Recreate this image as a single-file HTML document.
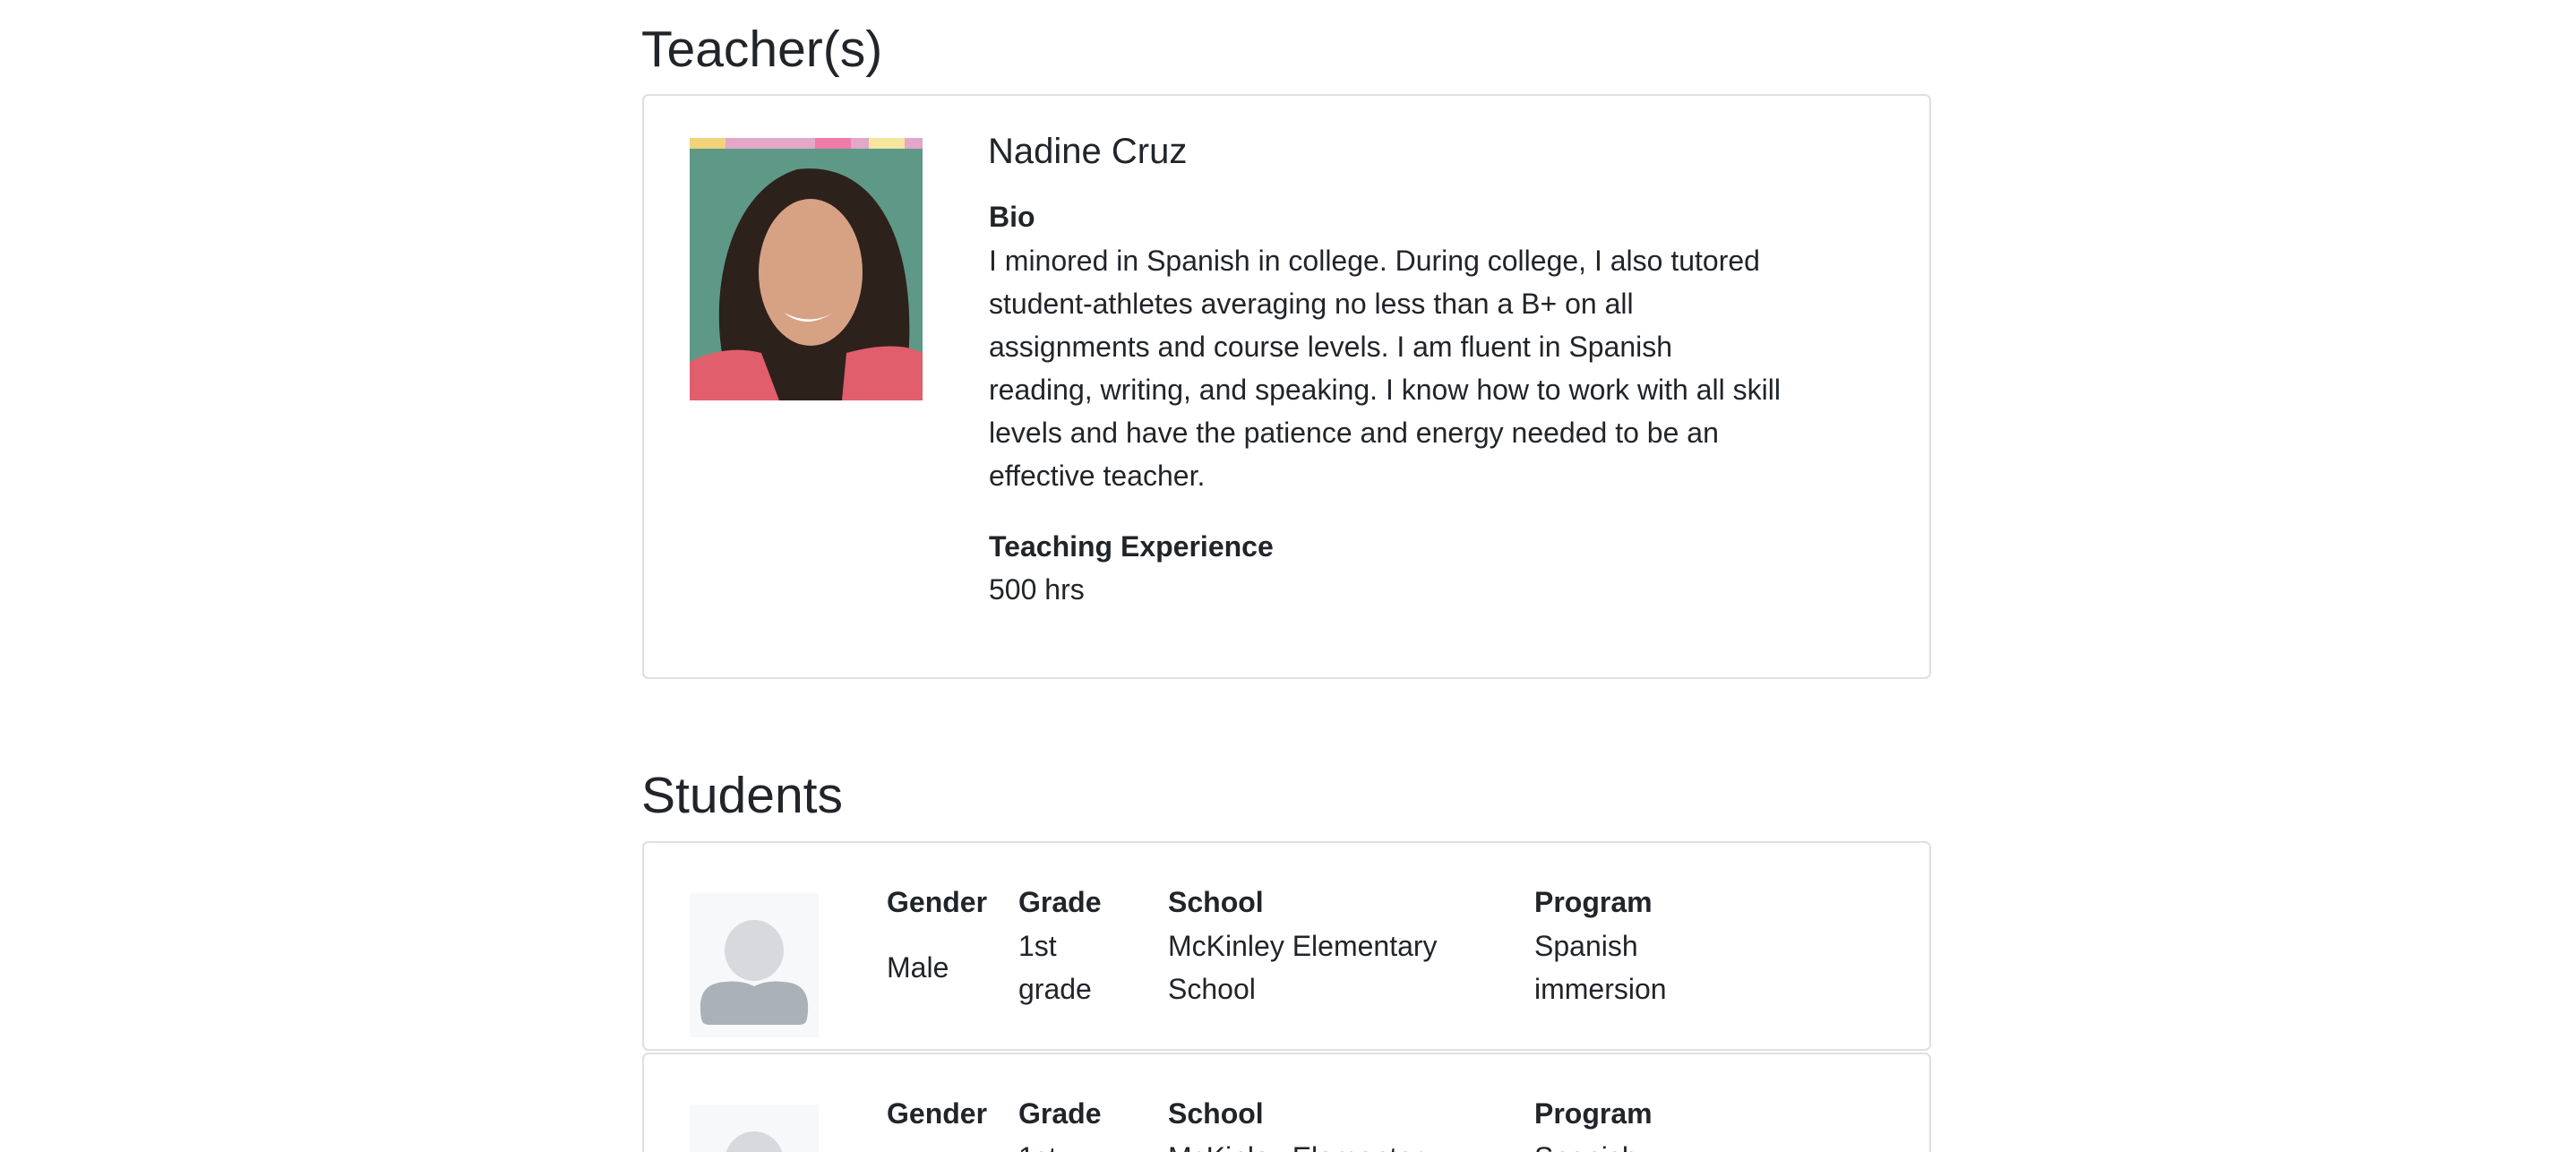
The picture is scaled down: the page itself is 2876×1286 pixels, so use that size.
<!DOCTYPE html>
<html><head><meta charset="utf-8">
<style>
*{margin:0;padding:0;box-sizing:border-box}
html,body{width:2876px;height:1286px;overflow:hidden}
body{background:#fff;position:relative;font-family:"Liberation Sans",Arial,sans-serif;color:#212529}
.a{position:absolute;white-space:nowrap}
.h{font-size:57px;line-height:70px}
.card{position:absolute;left:717px;width:1439px;border:2px solid #dfdfdf;border-radius:7px;background:#fff}
.t{font-size:32px;line-height:48px}
.b{font-weight:bold}
</style></head><body>
<div class="a h" style="left:716px;top:20px">Teacher(s)</div>
<div class="card" style="top:105px;height:653px"></div>
<svg class="a" style="left:770px;top:154px" width="260" height="293" viewBox="0 0 260 293">
<rect width="260" height="293" fill="#5e9987"/>
<rect width="260" height="12" fill="#e3a7c8"/>
<rect x="0" y="0" width="40" height="12" fill="#f1d37a"/><rect x="140" y="0" width="40" height="12" fill="#f07aa8"/><rect x="200" y="0" width="40" height="12" fill="#f6e6a0"/>
<path d="M40 260 C20 180 40 60 120 35 C200 25 250 100 245 230 L240 293 L20 293 Z" fill="#2d211c"/>
<ellipse cx="135" cy="150" rx="58" ry="82" fill="#d7a284"/>
<path d="M0 250 Q40 230 80 240 L100 293 L0 293Z" fill="#e15e6c"/>
<path d="M175 240 Q230 225 260 240 L260 293 L170 293Z" fill="#e15e6c"/>
<path d="M105 195 Q130 215 160 195 Q135 210 105 195Z" fill="#fff"/>
</svg>
<div class="a" style="left:1103px;top:145px;font-size:40px;line-height:48px">Nadine Cruz</div>
<div class="a t b" style="left:1104px;top:218px">Bio</div>
<div class="a t" style="left:1104px;top:267px">I minored in Spanish in college. During college, I also tutored<br>student-athletes averaging no less than a B+ on all<br>assignments and course levels. I am fluent in Spanish<br>reading, writing, and speaking. I know how to work with all skill<br>levels and have the patience and energy needed to be an<br>effective teacher.</div>
<div class="a t b" style="left:1104px;top:586px">Teaching Experience</div>
<div class="a t" style="left:1104px;top:634px">500 hrs</div>

<div class="a h" style="left:716px;top:853px">Students</div>

<div class="card" style="top:939px;height:234px"></div>
<div class="card" style="top:1175px;height:140px"></div>

<svg class="a" style="left:770px;top:997px" width="144" height="161" viewBox="0 0 144 161"><rect width="144" height="161" fill="#f7f8fa"/><ellipse cx="72" cy="64" rx="33" ry="34" fill="#d7d9dd"/><path d="M13 140 C8 110 20 100 40 99 Q58 97 72 104 Q86 97 104 99 C124 100 136 110 131 140 Q130 147 122 147 L22 147 Q14 147 13 140Z" fill="#aab1b9"/></svg>
<svg class="a" style="left:770px;top:1233px" width="144" height="53" viewBox="0 0 144 53"><rect width="144" height="53" fill="#f7f8fa"/><ellipse cx="72" cy="64" rx="33" ry="34" fill="#d7d9dd"/></svg>

<div class="a t b" style="left:990px;top:983px">Gender</div>
<div class="a t b" style="left:1137px;top:983px">Grade</div>
<div class="a t b" style="left:1304px;top:983px">School</div>
<div class="a t b" style="left:1713px;top:983px">Program</div>
<div class="a t" style="left:990px;top:1056px">Male</div>
<div class="a t" style="left:1137px;top:1032px">1st<br>grade</div>
<div class="a t" style="left:1304px;top:1032px">McKinley Elementary<br>School</div>
<div class="a t" style="left:1713px;top:1032px">Spanish<br>immersion</div>

<div class="a t b" style="left:990px;top:1219px">Gender</div>
<div class="a t b" style="left:1137px;top:1219px">Grade</div>
<div class="a t b" style="left:1304px;top:1219px">School</div>
<div class="a t b" style="left:1713px;top:1219px">Program</div>
<div class="a t" style="left:1137px;top:1268px">1st</div>
<div class="a t" style="left:1304px;top:1268px">McKinley Elementary</div>
<div class="a t" style="left:1713px;top:1268px">Spanish</div>
</body></html>
